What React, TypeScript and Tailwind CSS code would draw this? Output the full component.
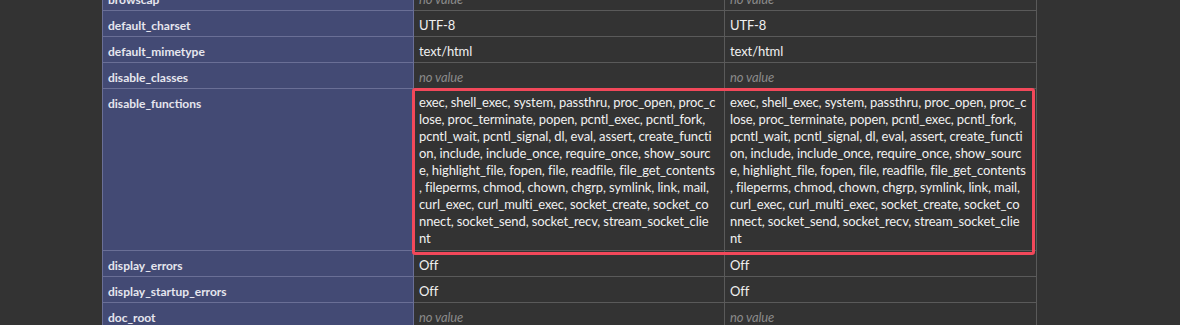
import React from "react";

const lines = [
  "exec, shell_exec, system, passthru, proc_open, proc_c",
  "lose, proc_terminate, popen, pcntl_exec, pcntl_fork,",
  "pcntl_wait, pcntl_signal, dl, eval, assert, create_functi",
  "on, include, include_once, require_once, show_sourc",
  "e, highlight_file, fopen, file, readfile, file_get_contents",
  ", fileperms, chmod, chown, chgrp, symlink, link, mail,",
  "curl_exec, curl_multi_exec, socket_create, socket_co",
  "nnect, socket_send, socket_recv, stream_socket_clie",
  "nt",
];

type Row = { k: string; v: string | null; multi?: boolean };

const rows: Row[] = [
  { k: "browscap", v: null },
  { k: "default_charset", v: "UTF-8" },
  { k: "default_mimetype", v: "text/html" },
  { k: "disable_classes", v: null },
  { k: "disable_functions", v: "", multi: true },
  { k: "display_errors", v: "Off" },
  { k: "display_startup_errors", v: "Off" },
  { k: "doc_root", v: null },
];

function Val({ r }: { r: Row }) {
  if (r.multi) {
    return (
      <td className="border border-[#5a5a5a] bg-[#333333] px-[5px] pt-[5px] pb-[3px] align-top text-[13px] tracking-[-0.1px] text-[#f0f0f0]">
        {lines.map((l, i) => (
          <div key={i} className="whitespace-nowrap">
            {l}
          </div>
        ))}
      </td>
    );
  }
  return (
    <td className="border border-[#5a5a5a] bg-[#333333] px-[5px] pt-[6px] pb-[2px] align-top whitespace-nowrap text-[13px] tracking-[-0.1px]">
      {r.v === null ? (
        <i className="text-[#8a8a8a]">no value</i>
      ) : (
        <span className="text-[#f0f0f0]">{r.v}</span>
      )}
    </td>
  );
}

export default function App() {
  return (
    <div
      className="h-[325px] w-[1180px] overflow-hidden bg-[#333333]"
      style={{ fontFamily: "Lato, 'Noto Sans', sans-serif" }}
    >
      <div className="relative ml-[102px] mt-[-16px] w-[934px]">
        <table className="w-[934px] table-fixed border-collapse leading-[17px]">
          <colgroup>
            <col className="w-[311px]" />
            <col className="w-[311px]" />
            <col className="w-[312px]" />
          </colgroup>
          <tbody>
            {rows.map((r) => (
              <tr key={r.k}>
                <td className="border border-[#6a6f96] bg-[#434a74] px-[5px] pt-[6px] pb-[2px] align-top text-[12px] font-bold whitespace-nowrap text-[#e6e6ee]">
                  {r.k}
                </td>
                <Val r={r} />
                <Val r={r} />
              </tr>
            ))}
          </tbody>
        </table>
        <div className="pointer-events-none absolute left-[310px] top-[104px] h-[167px] w-[623px] rounded-[3px] border-[3px] border-[#f2485a]" />
      </div>
    </div>
  );
}
